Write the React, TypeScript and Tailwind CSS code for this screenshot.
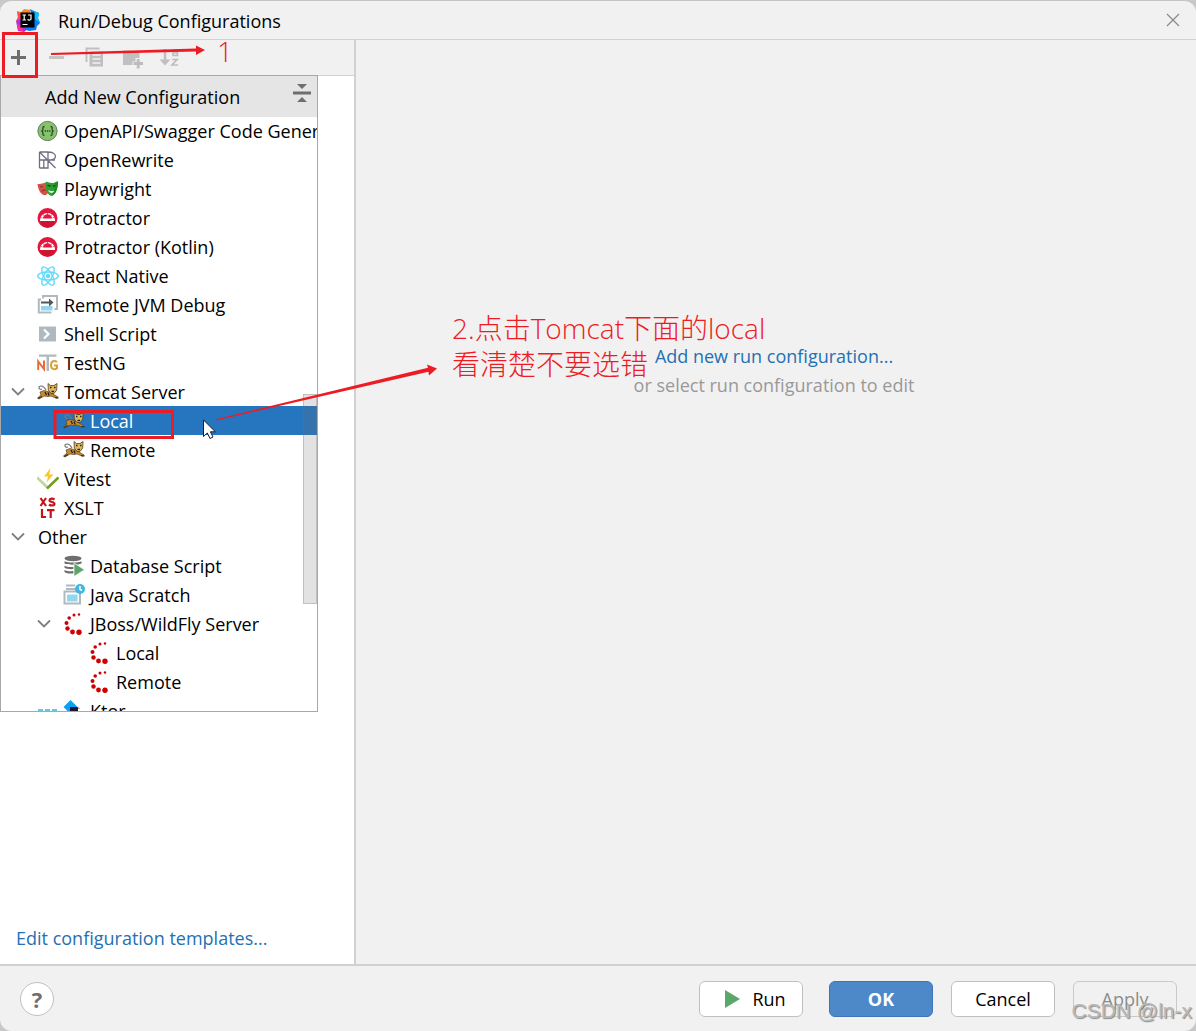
import type { ReactNode } from "react"
import clsx from "clsx"

type IconName =
  | "openapi" | "rewrite" | "playwright" | "protractor" | "react" | "jvm" | "shell"
  | "testng" | "tomcat" | "vitest" | "xslt" | "database" | "scratch" | "jboss" | "ktor"

type Row = { label: string; icon?: IconName; level: 0 | 1 | 2; open?: boolean; selected?: boolean }

const rows: Row[] = [
  { label: "OpenAPI/Swagger Code Generator", icon: "openapi", level: 0 },
  { label: "OpenRewrite", icon: "rewrite", level: 0 },
  { label: "Playwright", icon: "playwright", level: 0 },
  { label: "Protractor", icon: "protractor", level: 0 },
  { label: "Protractor (Kotlin)", icon: "protractor", level: 0 },
  { label: "React Native", icon: "react", level: 0 },
  { label: "Remote JVM Debug", icon: "jvm", level: 0 },
  { label: "Shell Script", icon: "shell", level: 0 },
  { label: "TestNG", icon: "testng", level: 0 },
  { label: "Tomcat Server", icon: "tomcat", level: 0, open: true },
  { label: "Local", icon: "tomcat", level: 1, selected: true },
  { label: "Remote", icon: "tomcat", level: 1 },
  { label: "Vitest", icon: "vitest", level: 0 },
  { label: "XSLT", icon: "xslt", level: 0 },
  { label: "Other", level: 0, open: true },
  { label: "Database Script", icon: "database", level: 1 },
  { label: "Java Scratch", icon: "scratch", level: 1 },
  { label: "JBoss/WildFly Server", icon: "jboss", level: 1, open: true },
  { label: "Local", icon: "jboss", level: 2 },
  { label: "Remote", icon: "jboss", level: 2 },
  { label: "Ktor", icon: "ktor", level: 1 },
]

const indent = ["pl-[9px]", "pl-[35px]", "pl-[61px]"]

const shapes: Record<IconName, ReactNode> = {
  openapi: (
    <>
      <circle cx="10.500" cy="11" r="9.6" fill="#85c46c" stroke="#5f7a58" />
      <path d="M7.500 6.500c-2 0-1.600 1.600-1.600 3 0 1-.6 1.500-1.600 1.500 1 0 1.600.5 1.600 1.500 0 1.400-.4 3 1.600 3M13.500 6.500c2 0 1.600 1.600 1.600 3 0 1 .6 1.500 1.600 1.500-1 0-1.600.5-1.600 1.500 0 1.400.4 3-1.600 3" fill="none" stroke="#33452e" strokeWidth="1.300" />
      <path d="M7.700 11h1.400M9.900 11h1.400M12.100 11h1.400" stroke="#33452e" strokeWidth="1.500" />
    </>
  ),
  rewrite: (
    <path d="M2.500 3H11v16M2.500 3v16M2.500 3l16 16M2.500 11H18M11 3c4.500 0 7.500 2 7.500 4.500S15.500 11 11 11M2.500 19H11v-8M6.800 11v8" fill="none" stroke="#6c707e" strokeWidth="1.300" />
  ),
  playwright: (
    <>
      <path d="M0.500 6c3 0 6-.5 9-2l2 10c-1.500 3-3 3.500-5 3C3 15.500 1 11 .5 6z" fill="#d65348" />
      <path d="M3 9l3-.5M5 13.500c1-1.500 2-1.800 3.500-1.500" stroke="#8f2d27" strokeWidth="1.200" fill="none" />
      <path d="M9 3.500c4 2 8 2 12-.3 0 6-1.500 13-6.500 14.800C9.500 16.500 8 10 9 3.500z" fill="#2d9f34" />
      <path d="M10.500 8c1-.8 2-.6 3 .4M16 8.500c1-1 2-1 2.800-.3" stroke="#0f4d14" strokeWidth="1.300" fill="none" />
      <path d="M11 12.300c2.300 1 4.500 1 6.500.2-.6 1.800-1.800 2.500-3.200 2.500s-2.600-1-3.300-2.700z" fill="#d9f2da" />
      <path d="M15 17.900c4.500-2 6-8.700 6-14.700l-3 1.300c.3 6-1 10.500-3 13.400z" fill="#1d8d22" />
    </>
  ),
  protractor: (
    <>
      <circle cx="10.500" cy="11" r="10" fill="#e3173e" />
      <path d="M3 13a7.500 7 0 0 1 15 0v1H3z" fill="#fff" />
      <path d="M6 11.500a4.500 4.200 0 0 1 9 0z" fill="#e3173e" />
      <path d="M3.500 10l2 .9M6 7.300l1 1.500M10.500 6v2M15 7.300l-1 1.500M17.500 10l-2 .9" stroke="#e3173e" strokeWidth=".7" />
      <path d="M3 14h15a8 8 0 0 1-7.500 6.500A8 8 0 0 1 3 14z" fill="#d0142f" />
    </>
  ),
  react: (
    <g fill="none" stroke="#61dafb" strokeWidth="1.400">
      <ellipse cx="11" cy="11" rx="10.300" ry="4" />
      <ellipse cx="11" cy="11" rx="10.300" ry="4" transform="rotate(60 11 11)" />
      <ellipse cx="11" cy="11" rx="10.300" ry="4" transform="rotate(120 11 11)" />
      <circle cx="11" cy="11" r="1.500" fill="#61dafb" />
    </g>
  ),
  jvm: (
    <>
      <path d="M6 4.500V2h14v13h-2.500M14.500 18.500H1.800V5.500H4" fill="none" stroke="#aeb9c0" strokeWidth="2" />
      <path d="M4 12h11.500v4.500H4z" fill="#8fd6ee" />
      <path d="M4 8.500h10" fill="none" stroke="#555" strokeWidth="2" />
      <path d="M12 4.500l4.500 4-4.500 4z" fill="#555" />
    </>
  ),
  shell: (
    <>
      <path d="M2 3.500h17V18.500H2z" fill="#aeb9c0" />
      <path d="M7 6.500l4.500 4.500L7 15.500" fill="none" stroke="#fff" strokeWidth="2.200" />
    </>
  ),
  testng: (
    <>
      <path d="M2 2.500h17.500v2.200H12V19H9.500V4.700H2z" fill="#aeb9c0" />
      <path d="M1.200 18V9.500L7 17V8.500" fill="none" stroke="#ee6a35" strokeWidth="2" />
      <path d="M20 10c-2.500-2.200-6-.8-6 3.200s3.500 5 6 3v-2.700h-3" fill="none" stroke="#dba03a" strokeWidth="2" />
    </>
  ),
  tomcat: (
    <>
      <path d="M9 9C6 3.500 1.500 4.500 2 7c.5 1.500 2 1.500 3 1" fill="none" stroke="#777" strokeWidth="1.200" />
      <path d="M3 11l4-1.500 4 1 5 2.500 5 3-1 1.500-6-2.500-3 .5-4-.5-5 3-1.500-1L4 14z" fill="#c98a2b" stroke="#5a431c" strokeWidth=".7" />
      <path d="M11 2.500l2.500 2h3.500l3-2-.3 6.500-2.700 3.500h-3L11.300 9z" fill="#e0b75d" stroke="#4f4022" strokeWidth=".8" />
      <path d="M13 6.500h1.500M17 6.500h1.500M14.500 10.500h2.500M8 11l1.500 3M11 11.500l1 3" stroke="#252019" strokeWidth="1.300" />
      <path d="M1 17.500l4-2M18 16.500l3.500.3" stroke="#333" strokeWidth="1.200" />
    </>
  ),
  vitest: (
    <>
      <path d="M0 9.500L11 20" stroke="#bcd69c" strokeWidth="2.500" />
      <path d="M10 20.500L21.500 9.500" stroke="#729b1b" strokeWidth="2.500" />
      <path d="M13.500 0L7 8.500h4l-1.500 6L16.500 6.500h-4.200z" fill="#fcc72b" />
    </>
  ),
  xslt: (
    <g fill="none" stroke="#c7121b" strokeWidth="2.200">
      <path d="M3.500 1l5.500 8M9 1l-5.500 8M17.500 2.500c-2-1.500-5-1-5 .8 0 2.200 5 1.200 5 3.500 0 2-3.500 2.200-5.500.7" />
      <path d="M5 12v8h4M10 13.100h7.500M13.700 13v8" />
    </g>
  ),
  database: (
    <>
      <ellipse cx="10" cy="3.500" rx="8.500" ry="2.700" fill="#6e6e6e" />
      <path d="M1.500 6.300c3 1.700 14 1.700 17 0v2.200c-3 1.600-14 1.600-17 0zM1.500 10.700c2 1.300 6 1.500 9 1.100v2.200c-3 .4-7 0-9-1.300zM1.500 15c2 1.100 6 1.500 9 1.100v2.300c-3 .4-7 .2-9-1.300z" fill="#6e6e6e" />
      <path d="M11 8l10.500 6.700L11 21.500z" fill="#59a869" stroke="#fff" strokeWidth=".7" />
    </>
  ),
  scratch: (
    <>
      <path d="M3 1.500h9M3 5h10" fill="none" stroke="#aeb9c0" strokeWidth="1.800" />
      <path d="M1.500 7.500h15.500v12H1.500z" fill="#fff" stroke="#aeb9c0" strokeWidth="2" />
      <path d="M4 10.500h10.500v7H4z" fill="#8fd6ee" />
      <circle cx="17" cy="5" r="5" fill="#40b6e0" />
      <path d="M17 2v3.300l2 1.200" fill="none" stroke="#fff" strokeWidth="1.500" />
    </>
  ),
  jboss: (
    <g fill="#cc0000">
      <circle cx="16" cy="1.500" r="1.200" />
      <circle cx="11" cy="2" r="1.500" />
      <circle cx="6.200" cy="5" r="1.800" />
      <circle cx="3.500" cy="10" r="2" />
      <circle cx="4.500" cy="15.500" r="2.200" />
      <circle cx="9.500" cy="19" r="2.400" />
      <circle cx="16" cy="19.300" r="2.700" />
    </g>
  ),
  ktor: (
    <>
      <path d="M7.500 0l7 7-7 7-7-7z" fill="#0aa0f5" />
      <path d="M7 7h8v8H7z" fill="#1a1730" />
      <path d="M14.500 7l2 2" stroke="#d92c7e" />
    </>
  ),
}

function RowIcon({ name }: { name: IconName }) {
  return (
    <svg viewBox="0 0 22 22" className="w-[22px] h-[22px] shrink-0" aria-hidden="true">
      {shapes[name]}
    </svg>
  )
}

function TreeRow({ row }: { row: Row }) {
  return (
    <li
      role="treeitem"
      aria-selected={!!row.selected}
      className={clsx(
        "flex items-center h-[29px] whitespace-nowrap",
        indent[row.level],
        row.selected && "bg-[#2675bf] text-white"
      )}
    >
      <span className="w-[27px] shrink-0">
        {row.open && (
          <svg viewBox="0 0 16 16" className="w-4 h-4" aria-hidden="true">
            <path d="M2 4.500l6 6 6-6" fill="none" stroke="#7f7f7f" strokeWidth="1.800" />
          </svg>
        )}
        {row.icon === "ktor" && (
          <svg viewBox="0 0 22 22" className="w-[22px] h-[22px]" aria-hidden="true">
            <path d="M2 10h5M9 10h5M16 10h5" stroke="#61c8e8" strokeWidth="2" />
          </svg>
        )}
      </span>
      {row.icon && <RowIcon name={row.icon} />}
      <span className={row.icon ? "pl-[5px]" : "pl-px"}>{row.label}</span>
    </li>
  )
}

function AddPopup() {
  return (
    <div className="absolute left-0 top-[74px] w-[318px] h-[637px] overflow-hidden bg-white border border-[#a8a8a8]">
      <div className="flex items-center justify-between h-[41px] pl-11 pr-1 bg-[#e5e5e5]">
        <h2>Add New Configuration</h2>
        <button aria-label="Collapse all" className="pb-2">
          <svg viewBox="0 0 22 22" className="w-[22px] h-[22px]">
            <path d="M6 2h10l-5 5zM2 9.500h18v3H2zM6 20h10l-5-5z" fill="#6e6e6e" />
          </svg>
        </button>
      </div>
      <ul role="tree" aria-label="Configuration types" className="-mt-px">
        {rows.map((row, i) => (
          <TreeRow key={i} row={row} />
        ))}
      </ul>
      {/* scroll thumb */}
      <div className="absolute right-0 top-[318px] w-[14px] h-[210px] border border-[#7070704d] bg-[#70707033]" />
    </div>
  )
}

function Toolbar() {
  return (
    <div className="flex items-center gap-4 h-9 pl-[7px] bg-[#f1f1f1] border-b border-[#d1d1d1]">
      <button aria-label="Add">
        <svg viewBox="0 0 22 22" className="w-[22px] h-[22px]">
          <path d="M4 10.500h15M11.500 3v15" stroke="#6e6e6e" strokeWidth="3" />
        </svg>
      </button>
      <button aria-label="Remove" disabled>
        <svg viewBox="0 0 22 22" className="w-[22px] h-[22px]">
          <path d="M4 10.500h15" stroke="#c4c4c4" strokeWidth="3" />
        </svg>
      </button>
      <button aria-label="Copy" disabled>
        <svg viewBox="0 0 22 22" className="w-[22px] h-[22px]">
          <path d="M3.500 15V1.500h13" fill="none" stroke="#c0c0c0" strokeWidth="2" />
          <path d="M6.500 4.500H20v15H6.500z" fill="#c0c0c0" />
          <path d="M9.500 8h8M9.500 12h8M9.500 16h8" stroke="#f1f1f1" strokeWidth="1.500" />
        </svg>
      </button>
      <button aria-label="New folder" disabled>
        <svg viewBox="0 0 22 22" className="w-[22px] h-[22px]">
          <path d="M2 3.500h7l2 2h7.500V11h-4v3.500h-3V18H2z" fill="#c0c0c0" />
          <path d="M12.500 16.500h9.500M17.200 12v9.500" stroke="#bcbcbc" strokeWidth="2.800" />
        </svg>
      </button>
      <button aria-label="Sort configurations" disabled>
        <svg viewBox="0 0 22 22" className="w-[22px] h-[22px]">
          <path d="M6 2v12" stroke="#c0c0c0" strokeWidth="2.500" />
          <path d="M.5 12.500h11L6 18.500z" fill="#c0c0c0" />
          <path d="M14 3h4.500v5.500H14V6h4M13 12.500h5L13 18h6" fill="none" stroke="#bdbdbd" strokeWidth="1.700" />
        </svg>
      </button>
    </div>
  )
}

function Logo() {
  return (
    <svg viewBox="0 0 24 24" className="w-6 h-6" aria-hidden="true">
      <path d="M1 3l4 1 3-3 7 1-3 8-10 1z" fill="#fd8b1f" />
      <path d="M1 3l5 4-1 8-5-2 2-4z" fill="#fc4a5e" />
      <path d="M0 13l5-2 8 9-5 4-6-1z" fill="#b32de0" />
      <path d="M1 16l5 2 1 5-5-1z" fill="#ff318c" />
      <path d="M14 1l4 2 5 2-1 5 2 5-3 3-1 4-7 1-5-2 10-6z" fill="#087cfa" />
      <path d="M18 3l5 2-1 5 2 5-5-4z" fill="#07c3f2" />
      <path d="M4.500 4.500h14v15h-14z" fill="#000" />
      <path d="M6.500 7h3.500M8.200 7v5M6.500 12H10M12 7h3v4c0 1-2 1.500-3.500.5M6.500 16.500h5" fill="none" stroke="#fff" strokeWidth="1.200" />
    </svg>
  )
}

function Annotations() {
  return (
    <div className="absolute inset-0 pointer-events-none text-[#ed1c24] font-light">
      <svg className="absolute left-0 top-0" width="450" height="450" aria-hidden="true">
        <path d="M3.500 32.500h33v43h-33zM55 410.500h117.500v26H55z" fill="none" stroke="#ed1c24" strokeWidth="3" />
        <path d="M51 52l145-4.500v-3l9 4.500-9 5v-3.500L51 54z" fill="#ed1c24" />
        <path d="M216 418.300l212-51.500-1-3.300 10 4-8 7-.6-3.700L216 419.500z" fill="#ed1c24" />
        {/* mouse pointer */}
        <path d="M203.500 419v16.500l3.800-3.500 2.700 5.500 3-1.500-2.600-5.200h5z" fill="#fff" stroke="#1b1b2b" />
      </svg>
      <p className="absolute left-[217px] top-[32px] text-[28px] leading-[36px]">1</p>
      <p className="absolute left-[452px] top-[309px] text-[28px] leading-[36px] whitespace-nowrap">
        2.点击Tomcat下面的local
        <br />
        看清楚不要选错
      </p>
    </div>
  )
}

export default function App() {
  return (
    <div className="bg-[#c8c8c8]">
      <div className="relative flex flex-col min-h-screen overflow-hidden rounded-xl border-t border-[#c4c4c4] bg-[#f1f1f1] text-black text-[18px] leading-6 font-['Open_Sans','Noto_Sans_CJK_SC',sans-serif]">
        <header className="flex items-center h-[39px] pl-4 pr-4 border-b border-[#d1d1d1]">
          <Logo />
          <h1 className="flex-1 pl-[18px] pt-0.5">Run/Debug Configurations</h1>
          <button aria-label="Close">
            <svg viewBox="0 0 14 14" className="w-[14px] h-[14px]">
              <path d="M1 1l12 12M13 1L1 13" stroke="#8a8a8a" strokeWidth="1.200" />
            </svg>
          </button>
        </header>

        <main className="flex flex-1">
          <aside className="relative flex flex-col w-[356px] shrink-0 border-r-2 border-[#d1d1d1] bg-white">
            <Toolbar />
            <div className="flex flex-1 items-end px-4 pb-[14px]">
              <a href="#templates" className="text-[#2470b3]">Edit configuration templates...</a>
            </div>
          </aside>
          <section className="flex flex-1 flex-col items-center pt-[302px] pr-1 leading-[29px]">
            <a href="#new" className="text-[#2470b3]">Add new run configuration...</a>
            <p className="text-[#999]">or select run configuration to edit</p>
          </section>
        </main>

        <footer className="flex items-center h-[67px] pl-5 pr-[19px] border-t-2 border-[#d1d1d1]">
          <button aria-label="Help" className="w-[34px] h-[34px] rounded-full border border-[#c0c0c0] bg-white text-[#6e6e6e] text-[22px] leading-[28px] font-bold">
            ?
          </button>
          <div className="flex gap-[18px] ml-auto">
            <button className="flex items-center justify-center gap-3 w-[104px] h-9 pl-2 mr-2 rounded-md border border-[#c0c0c0] bg-white">
              <svg viewBox="0 0 16 18" className="w-4 h-[18px]" aria-hidden="true">
                <path d="M1 0l15 9-15 9z" fill="#59a869" />
              </svg>
              Run
            </button>
            <button className="w-[104px] h-9 rounded-md border border-[#3d75b8] bg-[#4d89c9] text-white font-bold">OK</button>
            <button className="w-[104px] h-9 rounded-md border border-[#c0c0c0] bg-white">Cancel</button>
            <button disabled className="w-[104px] h-9 rounded-md border border-[#c9c9c9] text-[#8c8c8c]">Apply</button>
          </div>
        </footer>

        <AddPopup />
        <Annotations />
        <p className="absolute right-1 bottom-2 text-[21px] text-[#b9b9b9] [text-shadow:1px_1px_1px_#888] font-['Liberation_Sans',sans-serif]">CSDN @ln-x</p>
      </div>
    </div>
  )
}
